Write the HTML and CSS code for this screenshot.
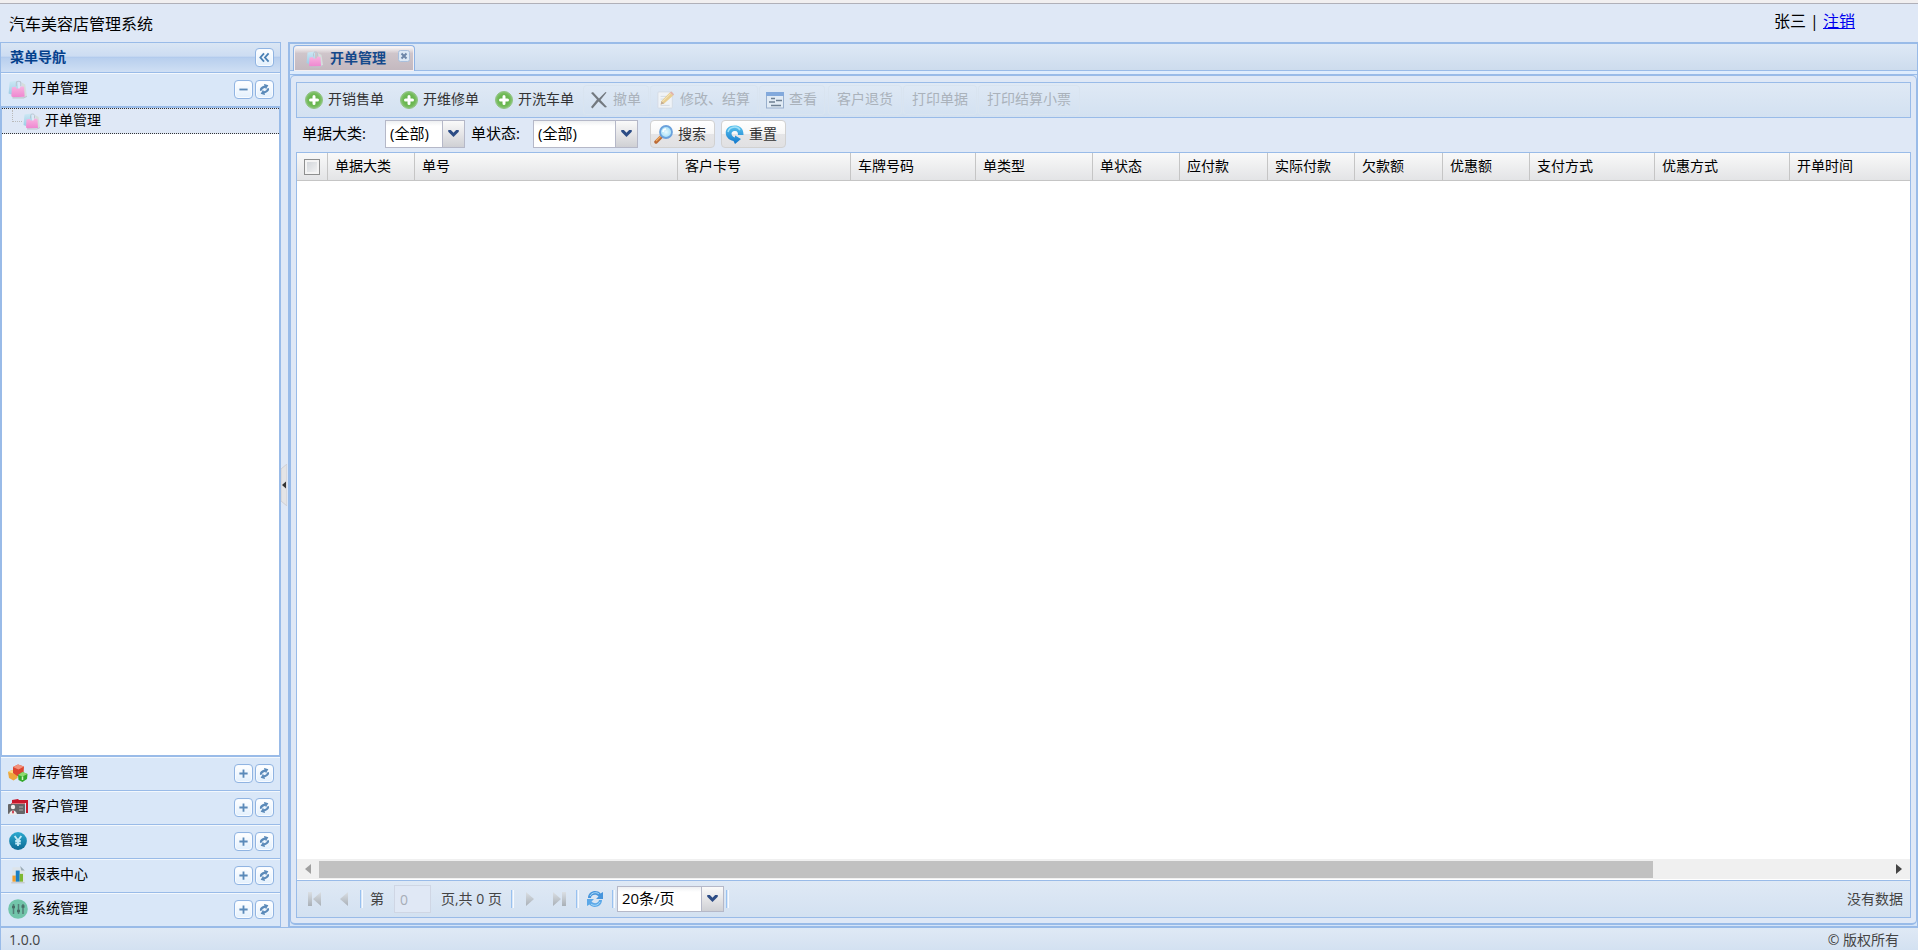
FILE: index.html
```html
<!DOCTYPE html>
<html lang="zh-CN">
<head>
<meta charset="utf-8">
<title>汽车美容店管理系统</title>
<link rel="stylesheet" href="styles.css">
</head>
<body>
<svg class="sprite" aria-hidden="true">
  <defs>
    <linearGradient id="gPink" x1="0" y1="0" x2="0" y2="1"><stop offset="0" stop-color="#f8b4e0"/><stop offset="1" stop-color="#ee86d0"/></linearGradient>
    <linearGradient id="gBlue" x1="0" y1="0" x2="0" y2="1"><stop offset="0" stop-color="#cde8f4"/><stop offset="1" stop-color="#9dcde6"/></linearGradient>
    <radialGradient id="gGreen"><stop offset="0" stop-color="#5aa845"/><stop offset=".7" stop-color="#6fba55"/><stop offset="1" stop-color="#8cc47a"/></radialGradient>
    <linearGradient id="gCoin" x1="0" y1="0" x2="0" y2="1"><stop offset="0" stop-color="#2ba9cf"/><stop offset="1" stop-color="#0d6a94"/></linearGradient>
    <linearGradient id="gReset" x1="0" y1="0" x2="0" y2="1"><stop offset="0" stop-color="#5cc4ee"/><stop offset="1" stop-color="#1177cc"/></linearGradient>
    <radialGradient id="gLens"><stop offset="0" stop-color="#e8faff"/><stop offset="1" stop-color="#9edcf6"/></radialGradient>
    <linearGradient id="gNav" x1="0" y1="0" x2="0" y2="1"><stop offset="0" stop-color="#dadfe4"/><stop offset="1" stop-color="#a9b0b7"/></linearGradient>
  </defs>
  <symbol id="bag" viewBox="0 0 18 18">
    <path d="M1.500 2.500L8 1.500l1 1v11l-6 .5-2.500-1z" fill="url(#gBlue)"/>
    <path d="M12 3l3.500 2 1.500 10-3 1.500z" fill="#d5dedc"/>
    <path d="M7.500 6.500V3.500c0-2 4-2 4 0v3" fill="none" stroke="#b9c6d2"/>
    <path d="M3.500 7.500l3.500-.5.500 1.500h3l1-2 3 .5.500 9-10.500.5-1.500-1z" fill="url(#gPink)"/>
    <path d="M4 17h10l3-1.500" stroke="#bfc4cc" fill="none"/>
  </symbol>
  <symbol id="sync" viewBox="0 0 12 12">
    <g transform="rotate(-20 6 6)"><path d="M1 6C1 3 3 2 7.500 2V0l4 3.200-4 3.200v-2C5 4.400 3.500 4.500 3.500 6zM11 6c0 3-2 4-6.500 4v2l-4-3.200 4-3.200v2C7 7.600 8.500 7.500 8.500 6z" fill="#5b8ab9"/></g>
  </symbol>
  <symbol id="plus" viewBox="0 0 12 12"><path d="M6 1.500v9M1.500 6h9" stroke="#5b8ab9" stroke-width="2"/></symbol>
  <symbol id="minus" viewBox="0 0 12 12"><path d="M1.500 6h9" stroke="#5b8ab9" stroke-width="2"/></symbol>
  <symbol id="chevrons" viewBox="0 0 12 12"><path d="M5.500 1.500L1.500 6l4 4.500M10.500 1.500L6.500 6l4 4.500" fill="none" stroke="#4b81b5" stroke-width="2"/></symbol>
  <symbol id="close" viewBox="0 0 12 12"><rect x=".5" y=".5" width="11" height="11" rx="2" fill="#dce8f5" stroke="#a9bfdc"/><path d="M3.500 3.500l5 5M8.500 3.500l-5 5" stroke="#6d86a8" stroke-width="2"/></symbol>
  <symbol id="cubes" viewBox="0 0 20 18">
    <path d="M0 8l4-2 5 2 .5 6-4 2.500L1 14z" fill="#eda63a"/><path d="M0 8l4-2 5 2-3.500 1.500z" fill="#f8dc84"/>
    <path d="M5 3l5-2.500 6 2-.5 7-5.500 3L5 9z" fill="#dc4630"/><path d="M5 3l5-2.500 6 2-5.500 3z" fill="#f2927c"/>
    <path d="M10 11l4.500-3 5 2-.5 5-4.500 3-4-2z" fill="#33a92b"/><path d="M10 11l4.500-3 5 2-5 2.500z" fill="#8ddb70"/><path d="M14.500 12.500V16" stroke="#d1f3c0" stroke-width="1.500"/>
  </symbol>
  <symbol id="cards" viewBox="0 0 20 18">
    <path d="M4 2l6-1 1 1h9v13h-2V5H4z" fill="#c8192c"/><path d="M3 5h14v2H3z" fill="#df7078"/>
    <rect y="6" width="17" height="10" rx="1" fill="#656567"/><circle cx="5" cy="9" r="2.200" fill="#efefef"/><path d="M1 17c0-6 8-6 8 0z" fill="#ececec"/><path d="M5 12l-1 2 1 2 1-2z" fill="#c8192c"/><path d="M11 9h4M11 12h4" stroke="#aaa"/>
  </symbol>
  <symbol id="coin" viewBox="0 0 18 18"><circle cx="9" cy="9" r="8" fill="url(#gCoin)"/><path d="M6 4.500L9 8.500l3-4M9 8v5.500M6.500 9h5M6.500 11.200h5" fill="none" stroke="#c4eaf6" stroke-width="1.700"/></symbol>
  <symbol id="chart" viewBox="0 0 18 18"><path d="M4 2h8l3 3v11l-12 1z" fill="#dde4ea"/><path d="M11 1l4 4h-3z" fill="#9aabb6"/><path d="M4 9.500h3V15H4z" fill="#f3a02e"/><path d="M7 5h3.500v10H7z" fill="#197fc4"/><path d="M10.500 8h3v7h-3z" fill="#7eb832"/><path d="M3 16h12" stroke="#c1c4c9"/></symbol>
  <symbol id="sliders" viewBox="0 0 20 20"><circle cx="10" cy="10" r="9.800" fill="#72c5aa"/><path d="M5.500 5v10M10.500 5v10M15 5v10" stroke="#547e77" stroke-width="1.500"/><path d="M4 8h3M9 12h3M13.500 7.500h3" stroke="#496c66" stroke-width="2.500"/></symbol>
  <symbol id="add" viewBox="0 0 18 18"><circle cx="9" cy="9" r="8.500" fill="url(#gGreen)" stroke="#8fc382"/><path d="M9 5.500v7M5.500 9h7" stroke="#fff" stroke-width="3" stroke-linecap="round"/></symbol>
  <symbol id="cancel" viewBox="0 0 18 18"><path d="M1 2l2-1 6 6.500L15.500 1l1 .5L10.500 9l6.500 7-2 .5-6.500-6-6 7L1 16l6-7.500z" fill="#62676c"/></symbol>
  <symbol id="edit" viewBox="0 0 20 20"><rect x="1" y="1" width="16" height="18" rx="1" fill="#f4f6f8" stroke="#d2d9e1"/><path d="M4 6h8M4 9h7M4 16h10" stroke="#ced6de"/><path d="M4 15l1-4 9-9 4 3-10 9z" fill="#eccb82"/><path d="M14 2l2-1.500 3 3-1 1.500z" fill="#e3a99c"/><path d="M4 15l1-4 3 3z" fill="#c1a485"/><path d="M6 12l9-9" stroke="#f9eabb"/></symbol>
  <symbol id="view" viewBox="0 0 18 18"><rect x=".5" y="1.500" width="17" height="15.500" fill="#e3edf6" stroke="#8fa7c7"/><path d="M0 1h18v4H0z" fill="#739fd8"/><path d="M5 7.500h4M10 9.500h6M3 11h6M5 14.500h10" stroke="#5c6f83" stroke-width="1.500"/></symbol>
  <symbol id="search" viewBox="0 0 19 19"><path d="M8 11l-6 6" stroke="#bc6a34" stroke-width="3.500" stroke-linecap="round"/><path d="M7 11l-5 5" stroke="#f2ad62" stroke-width="1.200"/><circle cx="12" cy="7" r="6" fill="url(#gLens)" stroke="#6aa1dc" stroke-width="1.800"/><path d="M9 7c0-2 1-3 3-3" stroke="#fff" fill="none" stroke-width="1.500"/></symbol>
  <symbol id="reset" viewBox="0 0 19 19"><path d="M10 19l6-5-6-3.500v2C6 12 5 6.500 9.500 6c3-.3 3.500 1.500 3.500 4h5.500C18.500 3 15 .5 9.500.5-2 .5-2 14 8.500 16z" fill="url(#gReset)"/><path d="M3 7c1-5 9-7 12-2" fill="none" stroke="#a1e0f7" stroke-width="1.500"/></symbol>
  <symbol id="refresh" viewBox="0 0 18 18"><path d="M2 8c0-7 9-9 12.500-4.500L17 2v7h-7l2.500-2.500C10 3.500 5 5 5 8z" fill="#4795dc"/><path d="M16 10c0 7-9 9-12.500 4.500L1 16V9h7l-2.500 2.500C8 14.500 13 13 13 10z" fill="#5ba8e8"/><path d="M4 6c2-4 7-4 9-2M14 12c-2 4-7 4-9 2" stroke="#a9dafa" fill="none"/></symbol>
  <symbol id="prev" viewBox="0 0 16 16"><path d="M12 1v14L4 8z" fill="url(#gNav)"/></symbol>
  <symbol id="next" viewBox="0 0 16 16"><path d="M4 1v14l8-7z" fill="url(#gNav)"/></symbol>
  <symbol id="first" viewBox="0 0 16 16"><path d="M1 1h4v14H1zM14 1v14L6 8z" fill="url(#gNav)"/></symbol>
  <symbol id="last" viewBox="0 0 16 16"><path d="M11 1h4v14h-4zM2 1v14l8-7z" fill="url(#gNav)"/></symbol>
  <symbol id="down" viewBox="0 0 12 8"><path d="M0 0h3l3 3 3-3h3v2L6 8 0 2z" fill="#2c4c85"/></symbol>
</svg>

<header class="top">
  <h1 class="brand">汽车美容店管理系统</h1>
  <div class="user">张三 | <a href="#logout">注销</a></div>
</header>

<div class="workspace">
  <nav class="sidebar" aria-label="菜单导航">
    <div class="side-title"><span class="name">菜单导航</span><button class="tool" aria-label="收起"><svg><use href="#chevrons"/></svg></button></div>
    <section class="group open">
      <div class="group-head"><svg class="icon"><use href="#bag"/></svg><span class="name">开单管理</span><button class="tool" aria-label="折叠"><svg><use href="#minus"/></svg></button><button class="tool" aria-label="刷新"><svg><use href="#sync"/></svg></button></div>
      <div class="tree"><a class="node" href="#orders"><span class="elbow"></span><svg class="icon"><use href="#bag"/></svg><span class="name">开单管理</span></a></div>
    </section>
    <div class="group-head"><svg class="icon"><use href="#cubes"/></svg><span class="name">库存管理</span><button class="tool" aria-label="展开"><svg><use href="#plus"/></svg></button><button class="tool" aria-label="刷新"><svg><use href="#sync"/></svg></button></div>
    <div class="group-head"><svg class="icon"><use href="#cards"/></svg><span class="name">客户管理</span><button class="tool" aria-label="展开"><svg><use href="#plus"/></svg></button><button class="tool" aria-label="刷新"><svg><use href="#sync"/></svg></button></div>
    <div class="group-head"><svg class="icon"><use href="#coin"/></svg><span class="name">收支管理</span><button class="tool" aria-label="展开"><svg><use href="#plus"/></svg></button><button class="tool" aria-label="刷新"><svg><use href="#sync"/></svg></button></div>
    <div class="group-head"><svg class="icon"><use href="#chart"/></svg><span class="name">报表中心</span><button class="tool" aria-label="展开"><svg><use href="#plus"/></svg></button><button class="tool" aria-label="刷新"><svg><use href="#sync"/></svg></button></div>
    <div class="group-head"><svg class="icon"><use href="#sliders"/></svg><span class="name">系统管理</span><button class="tool" aria-label="展开"><svg><use href="#plus"/></svg></button><button class="tool" aria-label="刷新"><svg><use href="#sync"/></svg></button></div>
  </nav>

  <div class="splitter"><button class="grip" aria-label="收起侧栏"><svg viewBox="0 0 6 42"><path d="M6 0v42L0 37V5z" fill="#e4e4e6" stroke="#cfcfd4"/><path d="M5 17.500v7L1 21z" fill="#333"/></svg></button></div>

  <main class="panel">
    <div class="tabs"><div class="tab"><svg class="icon"><use href="#bag"/></svg><span class="tab-name">开单管理</span><button class="tab-close" aria-label="关闭"><svg><use href="#close"/></svg></button></div></div>
    <div class="tab-line"></div>
    <div class="content">
      <div class="toolbar">
        <button class="act"><svg><use href="#add"/></svg><span>开销售单</span></button>
        <button class="act"><svg><use href="#add"/></svg><span>开维修单</span></button>
        <button class="act"><svg><use href="#add"/></svg><span>开洗车单</span></button>
        <button class="act" disabled><svg><use href="#cancel"/></svg><span>撤单</span></button>
        <button class="act" disabled><svg><use href="#edit"/></svg><span>修改、结算</span></button>
        <button class="act" disabled><svg><use href="#view"/></svg><span>查看</span></button>
        <button class="act plain" disabled><span>客户退货</span></button>
        <button class="act plain" disabled><span>打印单据</span></button>
        <button class="act plain" disabled><span>打印结算小票</span></button>
      </div>
      <form class="filters">
        <label class="field-name kind-name" for="kind">单据大类:</label>
        <span class="combo kind"><select id="kind"><option>(全部)</option></select><span class="arrow"><svg><use href="#down"/></svg></span></span>
        <label class="field-name state-name" for="state">单状态:</label>
        <span class="combo state"><select id="state"><option>(全部)</option></select><span class="arrow"><svg><use href="#down"/></svg></span></span>
        <button class="push first-push" type="button"><svg><use href="#search"/></svg>搜索</button>
        <button class="push" type="button"><svg><use href="#reset"/></svg>重置</button>
      </form>
      <div class="grid">
        <table class="records">
          <colgroup><col class="c-check"><col class="c-s"><col class="c-xl"><col class="c-l"><col class="c-m"><col class="c-n"><col class="c-s"><col class="c-t"><col class="c-s"><col class="c-t"><col class="c-s"><col class="c-m"><col class="c-w"><col></colgroup>
          <thead><tr><th class="check"><input type="checkbox" aria-label="全选"></th><th>单据大类</th><th>单号</th><th>客户卡号</th><th>车牌号码</th><th>单类型</th><th>单状态</th><th>应付款</th><th>实际付款</th><th>欠款额</th><th>优惠额</th><th>支付方式</th><th>优惠方式</th><th>开单时间</th></tr></thead>
        </table>
        <div class="empty"></div>
        <div class="scroll"><span class="scroll-end"><svg viewBox="0 0 6 10"><path d="M6 0v10L0 5z" fill="#a0a0a0"/></svg></span><span class="track"><span class="thumb"></span></span><span class="scroll-end"><svg viewBox="0 0 6 10"><path d="M0 0v10l6-5z" fill="#444"/></svg></span></div>
      </div>
      <div class="pager">
        <button class="nav" disabled aria-label="首页"><svg><use href="#first"/></svg></button>
        <button class="nav" disabled aria-label="上一页"><svg><use href="#prev"/></svg></button>
        <span class="sep"></span>
        <label class="page-word" for="page">第</label>
        <input class="page" id="page" value="0" disabled>
        <span class="total">页,共 0 页</span>
        <span class="sep"></span>
        <button class="nav" disabled aria-label="下一页"><svg><use href="#next"/></svg></button>
        <button class="nav" disabled aria-label="末页"><svg><use href="#last"/></svg></button>
        <span class="sep"></span>
        <button class="nav reload" aria-label="刷新"><svg><use href="#refresh"/></svg></button>
        <span class="sep"></span>
        <span class="combo size"><select aria-label="每页条数"><option>20条/页</option></select><span class="arrow"><svg><use href="#down"/></svg></span></span>
        <span class="sep"></span>
        <span class="none">没有数据</span>
      </div>
    </div>
  </main>
</div>

<footer class="status"><span>1.0.0</span><span>© 版权所有</span></footer>
</body>
</html>
```
FILE: styles.css
```css
* { box-sizing: border-box; }
:root { --line: #99bbe8; --bg: #dfe8f6; }
body {
  margin: 0; height: 100vh; display: flex; flex-direction: column; overflow: hidden;
  background: var(--bg); color: #000; border-top: 3px solid #f1eff0;
  font: 14px/20px "Open Sans", "Noto Sans CJK SC", sans-serif;
}
button, input, select { font: inherit; color: inherit; margin: 0; }
button { padding: 0; border: 0; background: none; }
svg { display: block; flex: none; }
.sprite { position: absolute; width: 0; height: 0; }

.top { display: flex; justify-content: space-between; height: 39px; padding: 0 63px 0 9px; border-top: 1px solid #b0b0b8; font-size: 16px; }
.brand { margin: 0; padding-top: 8px; font-size: 16px; font-weight: 400; line-height: 24px; }
.user { padding-top: 5px; line-height: 24px; }
.user a { color: #0000ee; }

.workspace { display: flex; flex: 1; min-height: 0; }
.sidebar { display: flex; flex-direction: column; width: 281px; border: 1px solid var(--line); }
.side-title {
  display: flex; align-items: center; height: 30px; padding: 0 6px 0 9px;
  border-bottom: 1px solid var(--line); color: #04408c; font-weight: 700;
  background: linear-gradient(#dae6f4, #ccdcf2 46%, #adc7ec 48%, #b8cfee 52%, #cfdff4);
}
.tool {
  display: flex; align-items: center; justify-content: center; width: 19px; height: 19px;
  border: 1px solid #90b4e2; border-radius: 4px; background: linear-gradient(#fff, #e3f0fd); box-shadow: inset 0 0 0 1px #f8fbff;
}
.tool svg { width: 11px; height: 11px; }
.group { display: flex; flex: 1; flex-direction: column; min-height: 0; }
.group-head {
  display: flex; align-items: center; gap: 2px; height: 34px; padding: 0 6px 2px 7px;
  border-top: 1px solid #f3f8fd; border-bottom: 1px solid var(--line); background: #d9e7f8;
}
.group-head .icon { width: 20px; height: 20px; }
.name { flex: 1; padding-bottom: 2px; }
.group-head .name { padding-left: 2px; }
.tree { flex: 1; border: 1px solid var(--line); border-bottom-width: 2px; background: #fff; }
.node { display: flex; align-items: center; height: 26px; padding-left: 10px; border: 1px dotted #333; border-width: 1px 0; background: var(--bg); color: #000; text-decoration: none; }
.node .icon { width: 18px; height: 18px; margin-right: 4px; }
.elbow { width: 10px; height: 12px; margin: 0 1px 11px 0; border: 1px dotted #bbb; border-width: 0 0 1px 1px; }

.splitter { display: flex; align-items: center; width: 7px; border-bottom: 1px solid var(--line); }
.grip svg { width: 6px; height: 42px; }

.panel { display: flex; flex: 1; flex-direction: column; min-width: 0; border: 2px solid var(--line); border-right-width: 1px; background: #d4e4f8; }
.tabs { display: flex; height: 27px; padding: 1px 3px 0; border-bottom: 1px solid var(--line); background: linear-gradient(#dee9f6, #cddced); }
.tab {
  display: flex; align-items: center; width: 122px; height: 26px; padding-left: 12px;
  border: 1px solid #8db2e3; border-bottom: 0; border-radius: 4px 4px 0 0; background: linear-gradient(#fff, #cfc5ca 30%, #c3b8bf); box-shadow: inset 0 0 0 1px #f3eff2;
}
.tab .icon { width: 18px; height: 18px; }
.tab-name { margin-left: 6px; padding-bottom: 2px; color: #15498b; font-weight: 700; }
.tab-close { align-self: flex-start; margin: 4px 0 0 12px; }
.tab-close svg { width: 12px; height: 12px; }
.tab-line { height: 4px; border-bottom: 1px solid var(--line); background: #deecfd; }
.content { display: flex; flex: 1; flex-direction: column; min-height: 0; margin: 0 0 1px; padding: 6px 5px 5px; border: 1px solid var(--line); border-bottom-width: 2px; border-radius: 5px; background: var(--bg); }

.toolbar { display: flex; align-items: center; gap: 3px; height: 36px; padding: 0 2px; border: 1px solid var(--line); background: linear-gradient(#dfe9f5, #d3e1f1); }
.act { display: flex; align-items: center; gap: 5px; height: 28px; padding: 0 7px 0 6px; color: #333; }
.act span { padding-bottom: 2px; }
.act svg { width: 18px; height: 18px; }
.act.plain { padding: 0 8px; }
.act:not(.plain) + .plain { margin-left: 2px; }
.act:disabled { color: #aab2bb; border-radius: 3px; box-shadow: 0 0 0 1px #d9e4f0; }
.act:disabled svg { opacity: .85; }

.filters { display: flex; align-items: center; height: 34px; padding: 0 0 2px 6px; }
.field-name { padding-bottom: 2px; font-size: 15px; }
.kind-name { width: 83px; }
.state-name { width: 62px; margin-left: 6px; }
.combo { display: grid; height: 28px; border: 1px solid #b5b8c8; background: #fff; }
.combo select, .combo .arrow { grid-area: 1 / 1; }
.combo select { width: 100%; padding: 0 4px 2px; border: 0; appearance: none; background: linear-gradient(#eef0f2, #fff 5px); font-size: 15px; line-height: 20px; }
.arrow { display: flex; align-items: center; justify-content: center; justify-self: end; width: 22px; padding-bottom: 2px; border-left: 1px solid #b5b8c8; background: linear-gradient(#fafafa, #e5e5e7 50%, #cfd0d4); pointer-events: none; }
.arrow svg { width: 11px; height: 7px; }
.combo.kind { width: 80px; }
.combo.state { width: 105px; }
.push { display: flex; align-items: center; gap: 5px; width: 65px; height: 28px; padding-left: 3px; margin-left: 6px; border: 1px solid #d1d1d1; border-radius: 4px; background: linear-gradient(#fff, #f7f7f7 48%, #e5e5e7 50%, #e1e1e3); color: #333; }
.push.first-push { margin-left: 12px; }
.push svg { width: 19px; height: 19px; }

.grid { display: flex; flex: 1; flex-direction: column; min-height: 0; border: 1px solid var(--line); background: #fff; }
.records { width: 100%; table-layout: fixed; border-collapse: separate; border-spacing: 0; }
.records th { height: 28px; padding: 0 7px 2px; border-right: 1px solid #c5c5c5; border-bottom: 1px solid #c5c5c5; background: linear-gradient(#f9f9f9, #e3e4e6); font-weight: 400; text-align: left; white-space: nowrap; }
.records th:last-child { border-right: 0; }
.records th.check { padding-bottom: 0; }
.c-check { width: 31px; } .c-s { width: 87px; } .c-t { width: 88px; } .c-xl { width: 263px; } .c-l { width: 173px; } .c-m { width: 125px; } .c-n { width: 117px; } .c-w { width: 135px; }
.records .check input { display: block; width: 16px; height: 16px; appearance: none; border: 1px solid #8e8f8f; background: linear-gradient(135deg, #cdd1d6, #f6f6f6); box-shadow: inset 0 0 0 2px #f4f4f4; }
.empty { flex: 1; }
.scroll { display: flex; height: 21px; background: #f0f0f0; border-bottom: 1px solid #fff; }
.scroll-end { display: flex; align-items: center; justify-content: center; width: 22px; }
.scroll-end svg { width: 6px; height: 10px; }
.track { display: flex; flex: 1; padding: 2px 0 1px; }
.thumb { width: 85%; background: #c1c1c1; }

.pager { display: flex; align-items: center; height: 37px; padding: 0 7px 0 3px; border: 1px solid var(--line); border-top: 0; background: linear-gradient(#dfe9f5, #d3e1f1); color: #444; }
.nav { display: flex; align-items: center; justify-content: center; width: 29px; height: 28px; }
.nav svg { width: 16px; height: 16px; }
.nav.reload svg { width: 18px; height: 18px; }
.sep { width: 3px; height: 18px; margin: 0 2px; border-left: 1px solid #98c1f0; border-right: 1px solid #f6faff; background: #d9e6f6; }
.page-word { margin: 0 10px 0 5px; }
.page { width: 37px; height: 28px; padding: 0 5px; border: 1px solid #cfd6e4; background: #e0e8f5; color: #a7adb7; }
.total { margin: 0 7px 0 10px; }
.combo.size { width: 107px; height: 26px; color: #000; }
.none { margin-left: auto; }

.status { display: flex; justify-content: space-between; align-items: center; height: 22px; padding: 2px 19px 0 8px; border-left: 1px solid var(--line); background: linear-gradient(#dfe9f5, #d3e1f1); color: #444; }
```
